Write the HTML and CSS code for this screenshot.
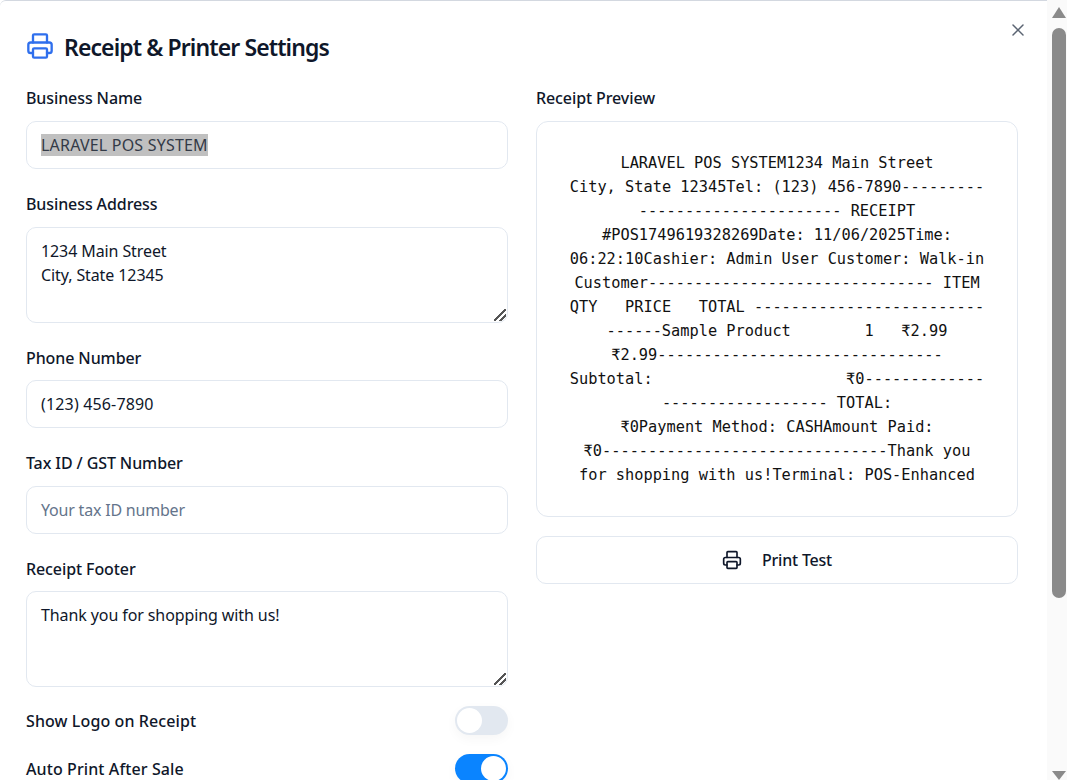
FILE: index.html
```html
<!DOCTYPE html>
<html lang="en">
<head>
    <meta charset="UTF-8">
    <meta name="viewport" content="width=device-width, initial-scale=1.0">
    <title>Receipt &amp; Printer Settings</title>
    <link rel="stylesheet" href="styles.css">
</head>
<body>
<div class="modal">
    <button class="close-btn" aria-label="Close">
        <svg width="20" height="20" viewBox="0 0 24 24" fill="none" stroke="currentColor" stroke-width="1.8" stroke-linecap="round"><path d="M18 6 6 18"/><path d="m6 6 12 12"/></svg>
    </button>
    <h2 class="modal-title">
        <svg class="title-icon" width="28" height="28" viewBox="0 0 24 24" fill="none" stroke="currentColor" stroke-width="2" stroke-linecap="round" stroke-linejoin="round"><path d="M6 18H4a2 2 0 0 1-2-2v-5a2 2 0 0 1 2-2h16a2 2 0 0 1 2 2v5a2 2 0 0 1-2 2h-2"/><path d="M6 9V3a1 1 0 0 1 1-1h10a1 1 0 0 1 1 1v6"/><rect x="6" y="14" width="12" height="8" rx="1"/></svg>
        Receipt &amp; Printer Settings
    </h2>
    <div class="columns">
        <div class="col-left">
            <div class="field">
                <label>Business Name</label>
                <div class="input"><span class="selected">LARAVEL POS SYSTEM</span></div>
            </div>
            <div class="field">
                <label>Business Address</label>
                <div class="input area">1234 Main Street<br>City, State 12345<span class="grip"></span></div>
            </div>
            <div class="field">
                <label>Phone Number</label>
                <div class="input digits">(123) 456-7890</div>
            </div>
            <div class="field">
                <label>Tax ID / GST Number</label>
                <div class="input placeholder">Your tax ID number</div>
            </div>
            <div class="field tight">
                <label>Receipt Footer</label>
                <div class="input area">Thank you for shopping with us!<span class="grip"></span></div>
            </div>
            <div class="toggle-row">
                <span>Show Logo on Receipt</span>
                <span class="toggle"></span>
            </div>
            <div class="toggle-row">
                <span>Auto Print After Sale</span>
                <span class="toggle on"></span>
            </div>
        </div>
        <div class="col-right">
            <div class="field">
                <label>Receipt Preview</label>
                <div class="preview">LARAVEL POS SYSTEM1234 Main Street
City, State 12345Tel: (123) 456-7890---------
---------------------- RECEIPT
#POS1749619328269Date: 11/06/2025Time:
06:22:10Cashier: Admin User Customer: Walk-in
Customer------------------------------- ITEM
QTY   PRICE   TOTAL -------------------------
------Sample Product        1   ₹2.99
₹2.99-------------------------------
Subtotal:                     ₹0-------------
------------------ TOTAL:
₹0Payment Method: CASHAmount Paid:
₹0-------------------------------Thank you
for shopping with us!Terminal: POS-Enhanced</div>
            </div>
            <button class="print-btn">
                <svg width="20" height="20" viewBox="0 0 24 24" fill="none" stroke="currentColor" stroke-width="2" stroke-linecap="round" stroke-linejoin="round"><path d="M6 18H4a2 2 0 0 1-2-2v-5a2 2 0 0 1 2-2h16a2 2 0 0 1 2 2v5a2 2 0 0 1-2 2h-2"/><path d="M6 9V3a1 1 0 0 1 1-1h10a1 1 0 0 1 1 1v6"/><rect x="6" y="14" width="12" height="8" rx="1"/></svg>
                Print Test
            </button>
        </div>
    </div>
</div>
<div class="scrollbar">
    <span class="arrow up"></span>
    <span class="track"><span class="thumb"></span></span>
    <span class="arrow down"></span>
</div>
</body>
</html>
```

FILE: styles.css
```css
html, body {
    height: 100%;
}
body {
    margin: 0;
    overflow: hidden;
    display: flex;
    background: #fff;
    color: #0f172a;
    font-family: "Noto Sans", "Open Sans", sans-serif;
    font-size: 16px;
}
.modal {
    position: relative;
    flex: 1;
    box-sizing: border-box;
    height: 780px;
    overflow: hidden;
    padding: 26px 0 0 26px;
    border-top: 1px solid #d3d8e0;
    border-top-left-radius: 6px;
}
.close-btn {
    position: absolute;
    top: 19px;
    right: 19px;
    padding: 0;
    border: none;
    background: none;
    color: #5b6472;
    display: flex;
}
.modal-title {
    display: flex;
    align-items: center;
    gap: 10px;
    margin: 0 0 20.4px;
    height: 40px;
    font-size: 23px;
    font-weight: 600;
    letter-spacing: -0.9px;
}
.title-icon {
    margin-bottom: 2px;
    color: #2f6fed;
}
.columns {
    display: grid;
    grid-template-columns: 482px 482px;
    gap: 28px;
}
.field {
    margin-bottom: 24px;
}
.field.tight {
    margin-bottom: 19px;
}
.field label {
    display: block;
    height: 25.6px;
    line-height: 23px;
    margin-bottom: 8px;
    font-weight: 500;
    letter-spacing: -0.1px;
}
.input {
    position: relative;
    box-sizing: border-box;
    height: 48px;
    padding: 11px 14px;
    border: 1px solid #e2e8f0;
    border-radius: 10px;
    line-height: 24px;
    letter-spacing: -0.1px;
    color: #0f172a;
}
.area {
    height: 96px;
}
.digits {
    letter-spacing: 0.16px;
}
.placeholder {
    color: #64748b;
    letter-spacing: -0.2px;
}
.selected {
    background: #c0c0c0;
    color: #333a47;
    letter-spacing: 0.2px;
}
.grip {
    position: absolute;
    right: 1px;
    bottom: 1px;
    width: 12px;
    height: 12px;
    background: linear-gradient(135deg, transparent 45%, #555 45%, #555 55%, transparent 55%, transparent 70%, #555 70%, #555 80%, transparent 80%);
}
.toggle-row {
    display: flex;
    align-items: center;
    justify-content: space-between;
    height: 29px;
    margin-bottom: 19px;
    font-weight: 500;
    letter-spacing: 0.1px;
}
.toggle {
    position: relative;
    width: 53px;
    height: 29px;
    border-radius: 15px;
    background: #e2e8f0;
    box-shadow: 0 4px 12px rgba(0, 0, 0, 0.04);
}
.toggle::after {
    content: "";
    position: absolute;
    top: 2px;
    left: 2px;
    width: 25px;
    height: 25px;
    border-radius: 50%;
    background: #fff;
}
.toggle.on {
    background: #0a84ff;
}
.toggle.on::after {
    left: 26px;
}
.preview {
    box-sizing: border-box;
    height: 395.6px;
    padding: 29px 0;
    border: 1px solid #e2e8f0;
    border-radius: 12px;
    font-family: "DejaVu Sans Mono", "Liberation Mono", monospace;
    font-size: 15.3px;
    line-height: 24px;
    text-align: center;
    white-space: pre;
    color: #111;
}
.col-right .field {
    margin-bottom: 19.4px;
}
.print-btn {
    display: flex;
    align-items: center;
    justify-content: center;
    gap: 20px;
    width: 100%;
    height: 48px;
    padding-top: 2px;
    border: 1px solid #e2e8f0;
    border-radius: 10px;
    background: #fff;
    color: #0f172a;
    font-family: inherit;
    font-size: 16px;
    font-weight: 500;
    letter-spacing: -0.2px;
}
.scrollbar {
    flex: none;
    box-sizing: border-box;
    width: 20px;
    height: 780px;
    padding: 0 1px 0 5px;
    display: flex;
    flex-direction: column;
    align-items: center;
    background: #fafafa;
}
.arrow {
    flex: none;
    width: 0;
    height: 0;
    border-left: 7.5px solid transparent;
    border-right: 7.5px solid transparent;
}
.arrow.up {
    margin-top: 7px;
    border-bottom: 11px solid #8a8a8a;
}
.arrow.down {
    border-top: 9px solid #8a8a8a;
}
.track {
    flex: 1;
    width: 14px;
    padding-top: 10px;
}
.thumb {
    display: block;
    height: 570px;
    border-radius: 7px;
    background: #8a8a8a;
}
```
